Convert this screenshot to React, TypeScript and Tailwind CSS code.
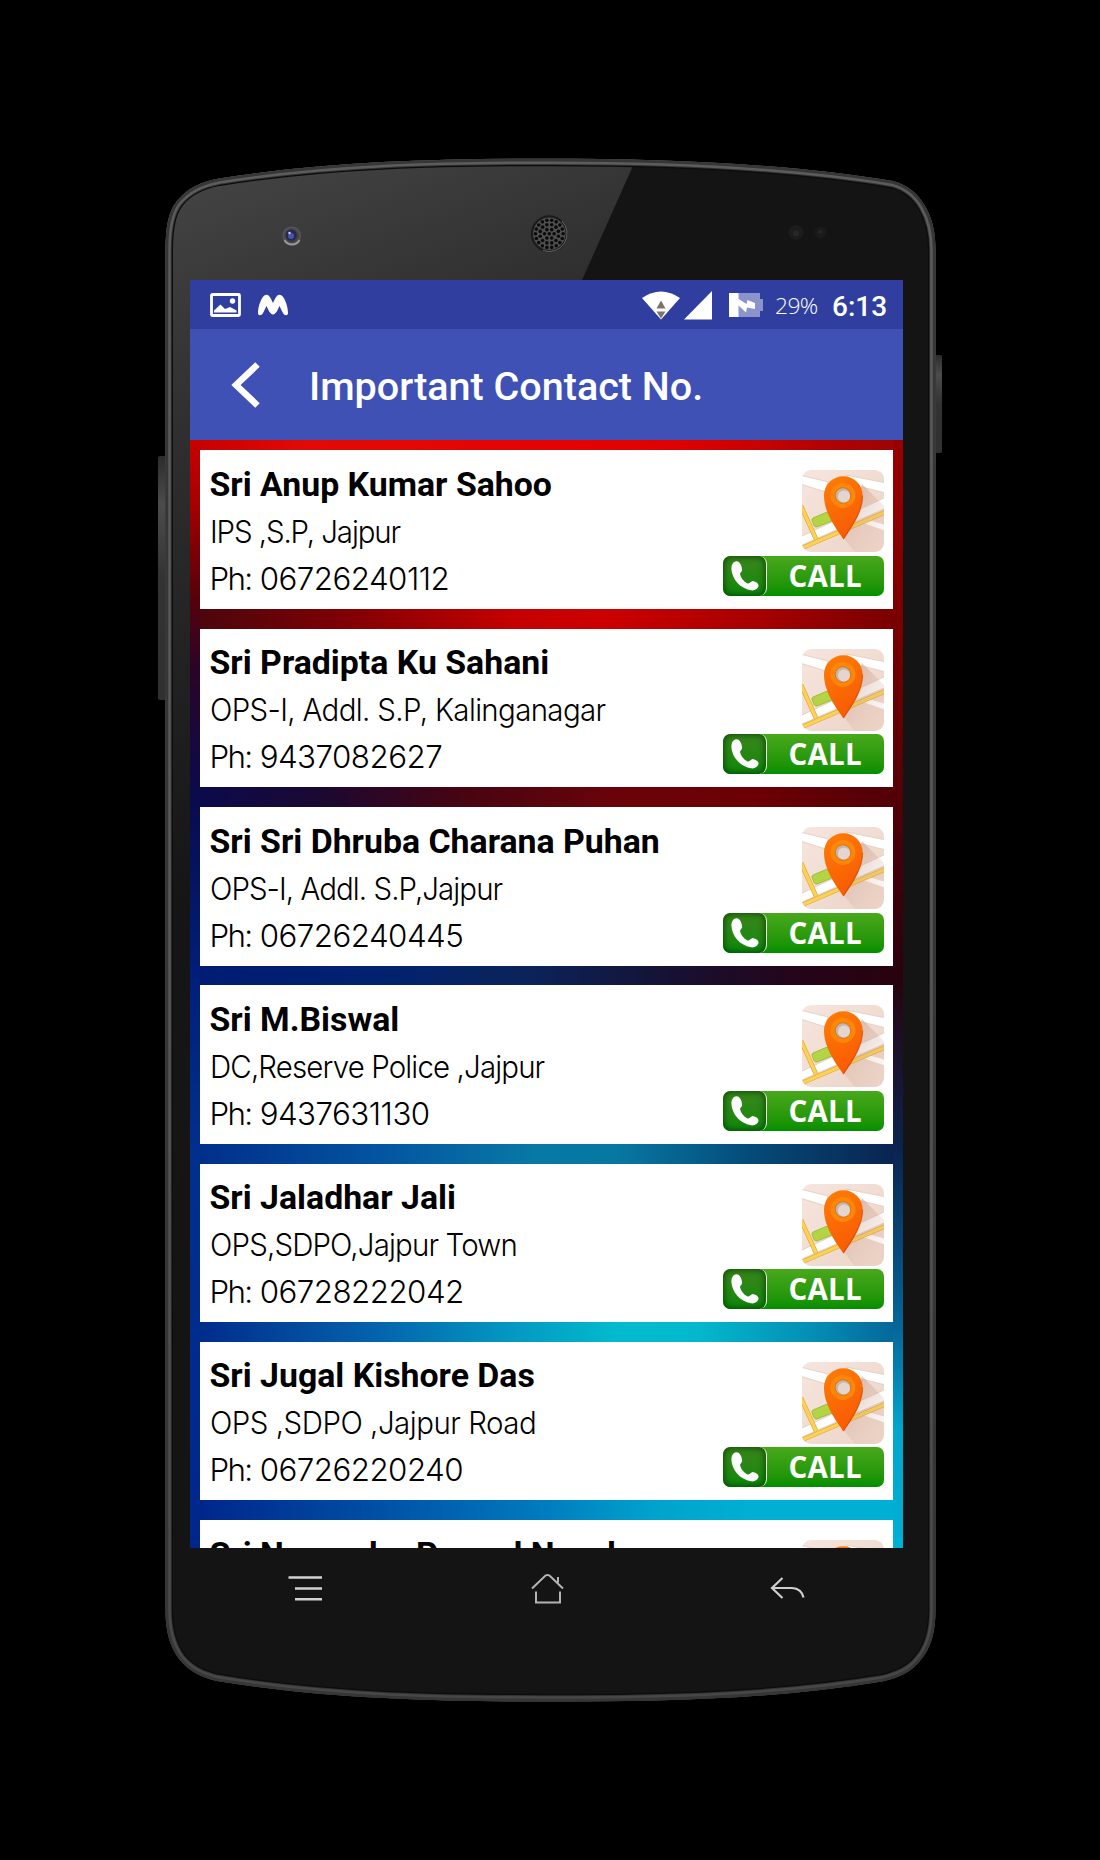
const contacts = [
  { name: "Sri Anup Kumar Sahoo", role: "IPS ,S.P, Jajpur", phone: "06726240112", roleTrack: "tracking-[-1.16px]", gap: "bg-[linear-gradient(90deg,#4c060c_0%,#7d0004_20%,#c40000_45%,#cc0000_58%,#a80000_80%,#7a0000_100%)]" },
  { name: "Sri Pradipta Ku Sahani", role: "OPS-I, Addl. S.P, Kalinganagar", phone: "9437082627", roleTrack: "tracking-[-0.67px]", gap: "bg-[linear-gradient(90deg,#0b0a4c_0%,#1c0830_18%,#480411_38%,#6a0309_60%,#6c0004_80%,#520006_100%)]" },
  { name: "Sri Sri Dhruba Charana Puhan", role: "OPS-I, Addl. S.P,Jajpur", phone: "06726240445", roleTrack: "tracking-[-0.98px]", gap: "bg-[linear-gradient(90deg,#001c74_0%,#02226e_28%,#0b2358_48%,#161133_68%,#24051a_85%,#28020e_100%)]" },
  { name: "Sri M.Biswal", role: "DC,Reserve Police ,Jajpur", phone: "9437631130", roleTrack: "tracking-[-0.9px]", gap: "bg-[linear-gradient(90deg,#002f8a_0%,#0353a0_25%,#0878a5_48%,#0778a2_60%,#054a78_80%,#0a2450_100%)]" },
  { name: "Sri Jaladhar Jali", role: "OPS,SDPO,Jajpur Town", phone: "06728222042", roleTrack: "tracking-[-0.88px]", gap: "bg-[linear-gradient(90deg,#002c8c_0%,#0462ac_25%,#0398c2_45%,#02bacd_60%,#02b8cc_72%,#048fb6_88%,#05689a_100%)]" },
  { name: "Sri Jugal Kishore Das", role: "OPS ,SDPO ,Jajpur Road", phone: "06726220240", roleTrack: "tracking-[-0.5px]", gap: "bg-[linear-gradient(90deg,#00268c_0%,#004fa4_25%,#007cc0_50%,#00a2cc_65%,#00b0d4_80%,#00b0d4_100%)]" },
  { name: "Sri Nagendra Prasad Nayak", role: "", phone: "", roleTrack: "", gap: "" },
];

function MapIcon() {
  return (
    <svg width="82" height="82" viewBox="0 0 82 82" className="block shrink-0">
      <defs>
        <clipPath id="tile"><rect width="82" height="82" rx="9" /></clipPath>
        <linearGradient id="tileFill" x1="0" y1="0" x2="1" y2="1">
          <stop offset="0" stopColor="#f6e6de" />
          <stop offset="1" stopColor="#ecd3c6" />
        </linearGradient>
        <linearGradient id="pinFill" x1="0" y1="0" x2="0.4" y2="1">
          <stop offset="0" stopColor="#ff7d06" />
          <stop offset="1" stopColor="#f85c04" />
        </linearGradient>
        <linearGradient id="pinShade" x1="0.2" y1="0" x2="1" y2="1">
          <stop offset="0" stopColor="#b98a74" stopOpacity="0.8" />
          <stop offset="1" stopColor="#d9b5a4" stopOpacity="0" />
        </linearGradient>
      </defs>
      <g clipPath="url(#tile)">
        <rect width="82" height="82" fill="url(#tileFill)" />
        <path d="M-2 5 26 12 24 22-2 14ZM44 5 84 13V23L56 16Z" fill="#fff" stroke="#dcc5ba" strokeWidth=".7" />
        <path d="M-2 67 84 27V38L-2 76Z" fill="#fff" stroke="#dcc5ba" strokeWidth=".7" />
        <path d="M58 52 84 61V55L66 50Z" fill="#fff" />
        <path d="M-1 36 14 69M0 78 84 42" stroke="#e0a93c" strokeWidth="4.6" fill="none" />
        <path d="M-1 36 14 69M0 78 84 42" stroke="#fbd254" strokeWidth="3.2" fill="none" />
        <path d="M11 48 24 42.500Q26 42 27 44L30 51 15 57Q13 57.500 12 55.500L10 50.500Q9.500 49 11 48Z" fill="#b5d445" stroke="#93b52c" strokeWidth=".8" />
        <path d="M41.500 68 60 14 82 36V82H53Z" fill="url(#pinShade)" opacity=".6" />
        <path d="M41.500 69.500C37 62 22 45 22 25.500A19.300 19.300 0 0 1 60.600 25.500C60.600 45 46 62 41.500 69.500Z" fill="url(#pinFill)" />
        <path d="M41.500 69C46 61 60.600 44 60.600 25.500" fill="none" stroke="#d64a02" strokeWidth="1.200" opacity=".7" />
        <circle cx="41" cy="25.500" r="12.500" fill="#ff920a" opacity=".7" />
        <circle cx="41" cy="25.500" r="7.800" fill="#c9b4aa" stroke="#d4731c" strokeWidth="1" />
        <circle cx="42" cy="26.500" r="6" fill="#e4d6ce" />
      </g>
    </svg>
  );
}

function CallButton() {
  return (
    <button className="flex h-10 w-[161px] shrink-0 overflow-hidden rounded-[7px] bg-linear-to-b from-[#48a81b] to-[#008f00]">
      <span className="h-10 w-11 rounded-[8px] border-r-[1.5px] border-[#e6f5dc] bg-linear-to-b from-[#37861a] to-[#06880a] shadow-[inset_0_0_6px_1px_rgba(0,50,0,0.75)]">
        <svg width="42" height="40" viewBox="0 0 42 40">
          <path d="M12.500 5.500C10 6 8.300 9 8.400 13 9 23 17 32.500 28 34.300 32 35 35 32 35.500 30 36 27 32 25.500 29.500 25 27.500 26 26 28 24.500 27.500 20.500 25.500 18 22 17 18 17.500 16 19.500 15.500 19 13 18.500 8 15.500 4.500 12.500 5.500Z" fill="#fff" />
        </svg>
      </span>
      <span className="pl-[21.5px] font-['Open_Sans',sans-serif] text-[29.5px] leading-[39.5px] font-bold tracking-[0.2px] text-white">CALL</span>
    </button>
  );
}

function StatusBar() {
  return (
    <div className="flex h-[49px] shrink-0 items-center bg-[#303f9f] pl-5 text-white">
      <svg width="31" height="24" viewBox="0 0 31 24" className="mt-px">
        <rect x="1.500" y="1.500" width="28" height="21" rx="1" fill="none" stroke="#fff" strokeWidth="2.800" />
        <path d="M4 19.500V17.500L10.500 11.500 15 16 20 14 26.500 17.500V19.500Z" fill="#fff" />
        <circle cx="22.500" cy="8" r="2.700" fill="#fff" />
      </svg>
      <svg width="30" height="22" viewBox="0 0 30 22" className="ml-[17px] mt-px">
        <path d="M0 19C0 13 3.500 1 8.500.800 11.500.800 13.500 6 15 9 16.500 6 18.500.800 21.500.800 26.500 1 30 13 30 19 30 22 26.500 22 25 19 23.500 16 22.500 14 21.500 12 20 15 18 20.500 15 20.500S10 15 8.500 12C7.500 14 6.500 16 5 19 3.500 22 0 22 0 19Z" fill="#fff" />
      </svg>
      <svg width="38" height="29" viewBox="0 0 38 29" className="ml-[354px] mt-0.5">
        <path d="M0 7Q19-6 38 7L19 28.500Z" fill="#fff" />
        <path d="M14.500 17.500H23.500L19 9.500ZM14.500 20.500H23.500L19 27.500Z" fill="#7b7468" />
      </svg>
      <svg width="28" height="29" viewBox="0 0 28 29" className="ml-1 mt-0.5"><path d="M28 0V28.500H0Z" fill="#fff" /></svg>
      <svg width="34" height="24" viewBox="0 0 34 24" className="ml-[17px] mt-px">
        <path d="M9 0H31V6H34V18H31V24H9Z" fill="#8b93cd" />
        <path d="M0 0H9.500V24H0Z" fill="#fff" />
        <path d="M9 5.500 17.500 11 18.500 7 26 10V16L18 14.500 17 19.500 9 12Z" fill="#fff" />
      </svg>
      <span className="mt-[3px] ml-3 w-[57px] font-['Open_Sans',sans-serif] text-[22.8px] font-[350] tracking-[-0.6px]">29%</span>
      <span className="mt-1 font-[Roboto,sans-serif] text-[28px] font-medium">6:13</span>
    </div>
  );
}

const holes = [[0, 0, 1], [4.8, 0, 6], [9.4, 0.26, 12], [13.8, 0, 18]].flatMap(([r, off, n]) =>
  Array.from({ length: n }, (_, i) => {
    const a = off + (i * 2 * Math.PI) / n;
    return [549.3 + r * Math.cos(a), 233.8 + r * Math.sin(a)];
  }),
);

const body =
  "M165.500 250C165.500 228 168 212 177 201 188 187 203 181.500 219 178.500 330 161 440 158.700 550 158.700S785 163 893 181C908 185 918 194 925 206 932 218 935.500 231 935.500 250V1610C935.500 1632 931 1649 919 1662 911 1672 898 1678 882 1681.500 770 1700 650 1701.500 550 1701.500S330 1700 217 1681C200 1677 189 1671 179 1659 169 1645 165.500 1630 165.500 1610Z";

function PhoneShell() {
  return (
    <svg width="1100" height="1860" viewBox="0 0 1100 1860" className="absolute inset-0">
      <defs>
        <clipPath id="bodyClip"><path d={body} /></clipPath>
        <linearGradient id="glare" gradientUnits="userSpaceOnUse" x1="200" y1="190" x2="440" y2="800">
          <stop offset="0" stopColor="#424242" />
          <stop offset="0.350" stopColor="#2e2e2e" />
          <stop offset="1" stopColor="#151515" />
        </linearGradient>
        <linearGradient id="rim" x1="0" y1="0" x2="0" y2="1">
          <stop offset="0" stopColor="#5c5c5c" />
          <stop offset="0.500" stopColor="#585858" />
          <stop offset="1" stopColor="#474747" />
        </linearGradient>
        <linearGradient id="key" x1="0" y1="0" x2="0" y2="1">
          <stop offset="0" stopColor="#2c2c2c" />
          <stop offset="0.200" stopColor="#4c4c4c" />
          <stop offset="0.500" stopColor="#333" />
          <stop offset="1" stopColor="#303030" />
        </linearGradient>
        <radialGradient id="lens">
          <stop offset="0" stopColor="#5560b8" />
          <stop offset="0.350" stopColor="#2b2f6c" />
          <stop offset="0.550" stopColor="#3a3a3e" />
          <stop offset="1" stopColor="#5b5b5b" />
        </radialGradient>
      </defs>
      <rect x="158" y="456" width="9" height="244" rx="2" fill="url(#key)" />
      <rect x="933.500" y="355" width="8.500" height="98" rx="2" fill="url(#key)" />
      <path d={body} fill="#141414" />
      <g clipPath="url(#bodyClip)" fill="none">
        <path d="M150 150H640L582 280 190 1158 150 1250Z" fill="url(#glare)" />
        <path d={body} stroke="#0c0c0c" strokeWidth="15" />
        <path d={body} stroke="#333" strokeWidth="12.500" />
        <path d={body} stroke="url(#rim)" strokeWidth="10.500" />
        <path d={body} stroke="#363636" strokeWidth="5.500" />
      </g>
      <circle cx="291.700" cy="235.700" r="9.300" fill="url(#lens)" />
      <path d="M284.500 240A8.500 8.500 0 0 0 299.500 240" fill="none" stroke="#9a9a9a" strokeWidth="2" />
      <circle cx="291" cy="235" r="5.500" fill="#262a50" />
      <circle cx="291" cy="236" r="3" fill="#4a54b0" />
      <circle cx="289.500" cy="233" r="1.200" fill="#d5d8f5" />
      <circle cx="549.300" cy="233.800" r="18.500" fill="#1b1b1b" />
      <path d="M562 221A18 18 0 0 1 543 250.500" fill="none" stroke="#6a6a6a" strokeWidth="1" />
      <circle cx="549.300" cy="233.800" r="16.200" fill="#505050" />
      {holes.map(([x, y], i) => <circle key={i} cx={x} cy={y} r="1.800" fill="#0b0b0b" />)}
      <circle cx="796" cy="232.500" r="7.500" fill="#1c1c1c" />
      <circle cx="796" cy="233.500" r="3" fill="#282828" />
      <circle cx="820.500" cy="232.500" r="6" fill="#1a1a1a" />
      <circle cx="820.500" cy="232" r="2.200" fill="#242424" />
    </svg>
  );
}

export default function App() {
  return (
    <div className="relative h-[1860px] w-[1100px] overflow-hidden bg-black">
      <PhoneShell />
      <div className="relative pt-[280px] pl-[190px]">
        <main className="flex h-[1268px] w-[713px] flex-col overflow-hidden">
          <StatusBar />
          <header className="flex h-[111px] shrink-0 items-center bg-[#3f51b5] text-white">
            <svg width="30" height="48" viewBox="0 0 30 48" fill="none" className="ml-10">
              <path d="M27.500 3.500 6 24 27.500 44.500" stroke="#fff" strokeWidth="6.500" />
            </svg>
            <h1 className="ml-[49px] mt-[5px] font-[Roboto,sans-serif] text-[39.5px] leading-none font-medium">Important Contact No.</h1>
          </header>
          <div className="flex min-h-0 flex-1">
            <div className="w-2.5 bg-[linear-gradient(180deg,#c80000_0px,#a80000_60px,#5c0008_150px,#2a0428_230px,#0a0a4c_355px,#001e78_530px,#00308c_710px,#002c8c_890px,#00268c_1108px)]" />
            <div className="flex min-w-0 flex-1 flex-col">
              <div className="h-[10.3px] shrink-0 bg-[linear-gradient(90deg,#c80000_0%,#e20a06_15%,#e40202_55%,#dd0000_70%,#9c0402_100%)]" />
              {contacts.map((c) => (
                <div key={c.name} className="shrink-0">
                  <section className="flex h-[158.6px] justify-between bg-white pt-[10.6px] pr-[9px] pl-[9.5px] whitespace-nowrap text-black">
                    <div>
                      <h2 className="font-[Roboto,sans-serif] text-[33.85px] leading-[48px] font-bold">{c.name}</h2>
                      {c.role && <p className={`origin-left scale-x-94 font-[Inter,sans-serif] text-[31.3px] leading-[47px] font-light ${c.roleTrack}`}>{c.role}</p>}
                      {c.phone && (
                        <p className="font-[Inter,sans-serif] text-[31.3px] leading-[46.7px] font-light tracking-[-0.52px]">
                          <span className="tracking-[-1.7px]">Ph:</span> {c.phone}
                        </p>
                      )}
                    </div>
                    <div className="flex flex-col items-end gap-[3.6px] pt-[9.4px]">
                      <MapIcon />
                      {c.phone && <CallButton />}
                    </div>
                  </section>
                  <div className={`h-[19.73px] ${c.gap}`} />
                </div>
              ))}
            </div>
            <div className="w-2.5 bg-[linear-gradient(180deg,#9a0000_0px,#900000_60px,#7a0000_180px,#520006_355px,#28020e_540px,#0a2450_710px,#05689a_890px,#02a6cc_990px,#00b0d4_1108px)]" />
          </div>
        </main>
        <nav className="flex items-center pt-[23px] pl-[98px]">
          <svg width="36" height="36" viewBox="0 0 36 36" stroke="#d2d2d2" strokeWidth="2.600">
            <path d="M.500 6.500H34M7 17.500H34M7 28.300H34" />
          </svg>
          <svg width="36" height="36" viewBox="0 0 36 36" fill="none" stroke="#b4b4b4" strokeWidth="2" className="ml-[206px]">
            <path d="M2 17.500 15.500 4.500Q17.500 3.300 19.500 4.500L33 17.500M28 6V11.500M6 20.500V31.500H30V20.500" />
          </svg>
          <svg width="36" height="36" viewBox="0 0 36 36" fill="none" stroke="#cfcfcf" strokeWidth="2.200" className="ml-[204px]">
            <path d="M12.500 7 2 17 12.500 27M2 17H22Q31.500 17.500 33.500 26.500" />
          </svg>
        </nav>
      </div>
    </div>
  );
}
